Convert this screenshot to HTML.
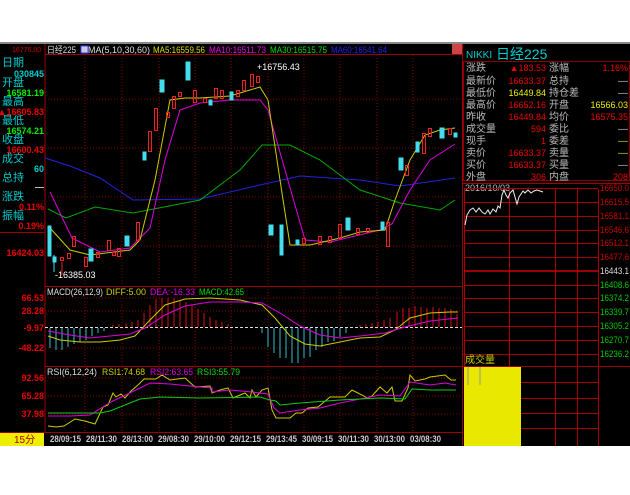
<!DOCTYPE html><html><head><meta charset="utf-8"><style>
body{margin:0;width:630px;height:490px;background:#fff;overflow:hidden;font-family:"Liberation Sans","Noto Sans CJK SC",sans-serif}
svg text{font-family:"Liberation Sans","Noto Sans CJK SC",sans-serif}
</style></head><body>
<svg width="630" height="490" viewBox="0 0 630 490" xmlns="http://www.w3.org/2000/svg">
<rect x="0" y="42" width="630" height="404" fill="#000"/>
<rect x="0" y="42" width="630" height="2" fill="#888"/>
<g stroke="#a00000" fill="none" stroke-width="1">
<line x1="45" y1="44" x2="45" y2="432"/>
<line x1="462.5" y1="44" x2="462.5" y2="446"/>
<line x1="45" y1="54.5" x2="462" y2="54.5"/>
<line x1="45" y1="286.5" x2="462" y2="286.5"/>
<line x1="45" y1="366.5" x2="462" y2="366.5"/>
<line x1="0" y1="432.5" x2="462" y2="432.5"/>
<line x1="0" y1="232.5" x2="45" y2="232.5"/>
<line x1="462" y1="183.5" x2="630" y2="183.5"/>
<line x1="462" y1="354.5" x2="598" y2="354.5"/>
<line x1="462" y1="366.5" x2="630" y2="366.5"/>
</g>
<g stroke="#800000" stroke-dasharray="1,2" fill="none">
<line x1="45" y1="99" x2="462" y2="99"/><line x1="45" y1="148" x2="462" y2="148"/><line x1="45" y1="197" x2="462" y2="197"/><line x1="45" y1="246" x2="462" y2="246"/>
<line x1="45" y1="298" x2="462" y2="298"/><line x1="45" y1="311" x2="462" y2="311"/><line x1="45" y1="348" x2="462" y2="348"/>
<line x1="45" y1="378" x2="462" y2="378"/><line x1="45" y1="396" x2="462" y2="396"/><line x1="45" y1="414" x2="462" y2="414"/>
<line x1="85" y1="55" x2="85" y2="432"/><line x1="122" y1="55" x2="122" y2="432"/><line x1="159" y1="55" x2="159" y2="432"/><line x1="195" y1="55" x2="195" y2="432"/><line x1="231" y1="55" x2="231" y2="432"/><line x1="268" y1="55" x2="268" y2="432"/><line x1="304" y1="55" x2="304" y2="432"/><line x1="340" y1="55" x2="340" y2="432"/><line x1="377" y1="55" x2="377" y2="432"/><line x1="413" y1="55" x2="413" y2="432"/>
</g>
<line x1="45" y1="327.5" x2="462" y2="327.5" stroke="#ddd" stroke-dasharray="3,2"/>
<g font-size="9">
<text x="47" y="53" fill="#ddd" textLength="29" lengthAdjust="spacingAndGlyphs">日经225</text>
<text x="88" y="53" fill="#ddd" textLength="62" lengthAdjust="spacingAndGlyphs">MA(5,10,30,60)</text>
<text x="153" y="53" fill="#dd0" textLength="52" lengthAdjust="spacingAndGlyphs">MA5:16559.56</text>
<text x="209" y="53" fill="#e0e" textLength="57" lengthAdjust="spacingAndGlyphs">MA10:16511.73</text>
<text x="270" y="53" fill="#0d0" textLength="57" lengthAdjust="spacingAndGlyphs">MA30:16515.75</text>
<text x="331" y="53" fill="#22e" textLength="56" lengthAdjust="spacingAndGlyphs">MA60:16541.64</text>
</g>
<rect x="81" y="46" width="7" height="7" fill="#ccd" stroke="#44f"/>
<rect x="452" y="44" width="10" height="10" fill="#c44"/>
<g font-size="9" font-weight="bold">
<text x="12" y="52" font-size="7" font-weight="normal" fill="#c00">16775.00</text>
<text x="2" y="66" fill="#0cc" font-size="11" font-weight="normal">日期</text>
<text x="44" y="77" fill="#0cc" text-anchor="end">030845</text>
<text x="2" y="86" fill="#0cc" font-size="11" font-weight="normal">开盘</text>
<text x="44" y="96" fill="#0e0" text-anchor="end">16581.19</text>
<text x="2" y="105" fill="#0cc" font-size="11" font-weight="normal">最高</text>
<text x="44" y="115" fill="#e00" text-anchor="end">▲16605.83</text>
<text x="2" y="124" fill="#0cc" font-size="11" font-weight="normal">最低</text>
<text x="44" y="134" fill="#0e0" text-anchor="end">16574.21</text>
<text x="2" y="143" fill="#0cc" font-size="11" font-weight="normal">收盘</text>
<text x="44" y="153" fill="#e00" text-anchor="end">16600.43</text>
<text x="2" y="162" fill="#0cc" font-size="11" font-weight="normal">成交</text>
<text x="44" y="172" fill="#0cc" text-anchor="end">60</text>
<text x="2" y="181" fill="#0cc" font-size="11" font-weight="normal">总持</text>
<text x="44" y="190" fill="#ccc" text-anchor="end">—</text>
<text x="2" y="200" fill="#0cc" font-size="11" font-weight="normal">涨跌</text>
<text x="44" y="210" fill="#e00" text-anchor="end">0.11%</text>
<text x="2" y="219" fill="#0cc" font-size="11" font-weight="normal">振幅</text>
<text x="44" y="229" fill="#e00" text-anchor="end">0.19%</text>
<text x="44" y="256" fill="#e00" text-anchor="end">16424.03</text>
<text x="44" y="301" fill="#e00" text-anchor="end">66.53</text>
<text x="44" y="314" fill="#e00" text-anchor="end">28.28</text>
<text x="44" y="331" fill="#e00" text-anchor="end">-9.97</text>
<text x="44" y="351" fill="#e00" text-anchor="end">-48.22</text>
<text x="44" y="381" fill="#e00" text-anchor="end">92.56</text>
<text x="44" y="399" fill="#e00" text-anchor="end">65.28</text>
<text x="44" y="417" fill="#e00" text-anchor="end">37.98</text>
</g>
<g fill="none" stroke-width="1">
<polyline stroke="#22d" points="45,158 70,166 100,178 133,200 200,199 260,185 300,176 360,180 400,186 455,178"/>
<polyline stroke="#0a0" points="48,209 66,218 95,207 133,213 200,200 240,170 262,145 290,145 320,160 360,190 400,203 440,210 455,200"/>
<polyline stroke="#d0d" points="50,192 72,238 100,252 130,248 150,228 165,160 180,110 200,103 230,100 260,100 268,110 285,170 305,240 330,242 380,230 392,224 410,190 430,160 455,144"/>
<polyline stroke="#cc0" points="50,228 70,250 90,255 130,250 140,240 155,180 170,100 185,98 200,98 230,96 260,87 268,100 280,180 290,245 310,245 340,238 360,232 385,230 395,200 410,160 425,135 440,130 455,128"/>
</g>
<g stroke-width="1">
<g fill="#4de" stroke="#4de">
<rect x="48" y="226" width="3" height="30"/><line x1="54" y1="255" x2="54" y2="272"/><rect x="53" y="257" width="3" height="5"/>
<rect x="89" y="249" width="4" height="12"/><rect x="125" y="236" width="4" height="10"/><rect x="143" y="152" width="3" height="8"/><rect x="160" y="80" width="4" height="12"/><rect x="186" y="62" width="4" height="18"/><rect x="209" y="100" width="3" height="5"/><rect x="269" y="225" width="4" height="10"/><rect x="280" y="225" width="3" height="30"/><rect x="296" y="240" width="3" height="5"/><rect x="346" y="218" width="4" height="12"/><rect x="381" y="222" width="3" height="8"/><rect x="399" y="158" width="4" height="12"/><rect x="416" y="142" width="3" height="10"/><rect x="440" y="128" width="4" height="10"/><rect x="454" y="133" width="3" height="4"/>
<rect x="230" y="92" width="3" height="8"/>
</g>
<g fill="none" stroke="#e22">
<rect x="60.5" y="257.5" width="3" height="3"/><line x1="62" y1="262" x2="62" y2="275"/><rect x="67.5" y="253.5" width="3" height="5"/><rect x="72.5" y="236.5" width="3" height="10"/><rect x="84.5" y="257.5" width="3" height="9"/><rect x="96.5" y="252.5" width="3" height="5"/><rect x="107.5" y="240.5" width="3" height="10"/><rect x="112.5" y="252.5" width="3" height="3"/><rect x="117.5" y="248.5" width="3" height="8"/><rect x="136.5" y="222.5" width="3" height="18"/><rect x="148.5" y="131.5" width="3" height="20"/><rect x="154.5" y="108.5" width="3" height="22"/><rect x="166.5" y="112.5" width="3" height="5"/><rect x="172.5" y="96.5" width="3" height="12"/><rect x="178.5" y="92.5" width="3" height="4"/><rect x="193.5" y="90.5" width="3" height="12"/><rect x="203.5" y="98.5" width="3" height="4"/><rect x="214.5" y="88.5" width="3" height="10"/><rect x="220.5" y="90.5" width="3" height="8"/><rect x="236.5" y="90.5" width="3" height="6"/><rect x="242.5" y="80.5" width="3" height="10"/><rect x="250.5" y="74.5" width="3" height="12"/><rect x="256.5" y="76.5" width="3" height="6"/><rect x="302.5" y="238.5" width="3" height="5"/><rect x="318.5" y="236.5" width="3" height="8"/><rect x="328.5" y="236.5" width="3" height="6"/><rect x="338.5" y="224.5" width="3" height="14"/><rect x="356.5" y="228.5" width="3" height="6"/><rect x="366.5" y="228.5" width="3" height="4"/><rect x="386.5" y="222.5" width="3" height="24"/><rect x="405.5" y="165.5" width="3" height="10"/><rect x="422.5" y="133.5" width="3" height="20"/><rect x="428.5" y="128.5" width="3" height="8"/><rect x="448.5" y="128.5" width="3" height="6"/>
</g>
</g>
<text x="257" y="70" font-size="9" fill="#fff">+16756.43</text>
<text x="55" y="278" font-size="9" fill="#fff">-16385.03</text>
<text x="47" y="295" font-size="9" fill="#ddd" textLength="56" lengthAdjust="spacingAndGlyphs">MACD(26,12,9)</text>
<text x="106" y="295" font-size="9" fill="#cc0" textLength="40" lengthAdjust="spacingAndGlyphs">DIFF:5.00</text>
<text x="150" y="295" font-size="9" fill="#d0d" textLength="45" lengthAdjust="spacingAndGlyphs">DEA:-16.33</text>
<text x="199" y="295" font-size="9" fill="#0d0" textLength="45" lengthAdjust="spacingAndGlyphs">MACD:42.65</text>
<g stroke="#3bc"><line x1="50" y1="328" x2="50" y2="348"/><line x1="56" y1="328" x2="56" y2="350"/><line x1="62" y1="328" x2="62" y2="350"/><line x1="68" y1="328" x2="68" y2="347"/><line x1="74" y1="328" x2="74" y2="344"/><line x1="80" y1="328" x2="80" y2="342"/><line x1="86" y1="328" x2="86" y2="340"/><line x1="92" y1="328" x2="92" y2="336"/><line x1="98" y1="328" x2="98" y2="333"/><line x1="104" y1="328" x2="104" y2="331"/>
<line x1="262" y1="328" x2="262" y2="333"/><line x1="268" y1="328" x2="268" y2="347"/><line x1="274" y1="328" x2="274" y2="353"/><line x1="280" y1="328" x2="280" y2="358"/><line x1="286" y1="328" x2="286" y2="358"/><line x1="292" y1="328" x2="292" y2="363"/><line x1="298" y1="328" x2="298" y2="363"/><line x1="304" y1="328" x2="304" y2="358"/><line x1="310" y1="328" x2="310" y2="357"/><line x1="316" y1="328" x2="316" y2="350"/><line x1="322" y1="328" x2="322" y2="347"/><line x1="328" y1="328" x2="328" y2="342"/><line x1="334" y1="328" x2="334" y2="341"/><line x1="340" y1="328" x2="340" y2="337"/><line x1="346" y1="328" x2="346" y2="333"/></g>
<g stroke="#d11"><line x1="113" y1="327" x2="113" y2="325"/><line x1="119" y1="327" x2="119" y2="324"/><line x1="126" y1="327" x2="126" y2="323"/><line x1="132" y1="327" x2="132" y2="322"/><line x1="138" y1="327" x2="138" y2="320"/><line x1="144" y1="327" x2="144" y2="313"/><line x1="150" y1="327" x2="150" y2="305"/><line x1="156" y1="327" x2="156" y2="299"/><line x1="162" y1="327" x2="162" y2="298"/><line x1="168" y1="327" x2="168" y2="298"/><line x1="174" y1="327" x2="174" y2="298"/><line x1="180" y1="327" x2="180" y2="301"/><line x1="186" y1="327" x2="186" y2="302"/><line x1="192" y1="327" x2="192" y2="305"/><line x1="198" y1="327" x2="198" y2="309"/><line x1="204" y1="327" x2="204" y2="313"/><line x1="210" y1="327" x2="210" y2="317"/><line x1="216" y1="327" x2="216" y2="320"/><line x1="222" y1="327" x2="222" y2="322"/><line x1="228" y1="327" x2="228" y2="324"/>
<line x1="360" y1="327" x2="360" y2="325"/><line x1="366" y1="327" x2="366" y2="324"/><line x1="372" y1="327" x2="372" y2="323"/><line x1="378" y1="327" x2="378" y2="322"/><line x1="384" y1="327" x2="384" y2="320"/><line x1="390" y1="327" x2="390" y2="318"/><line x1="397" y1="327" x2="397" y2="312"/><line x1="403" y1="327" x2="403" y2="308"/><line x1="409" y1="327" x2="409" y2="308"/><line x1="415" y1="327" x2="415" y2="306"/><line x1="421" y1="327" x2="421" y2="307"/><line x1="427" y1="327" x2="427" y2="308"/><line x1="433" y1="327" x2="433" y2="307"/><line x1="439" y1="327" x2="439" y2="308"/><line x1="445" y1="327" x2="445" y2="308"/><line x1="451" y1="327" x2="451" y2="309"/><line x1="457" y1="327" x2="457" y2="314"/></g>
<polyline fill="none" stroke="#cc0" points="48,336 60,340 80,342 100,342 120,340 135,336 150,320 165,305 185,299 210,298 240,300 262,305 275,318 290,336 305,344 320,346 340,342 360,338 380,337 395,330 410,318 430,313 450,312 458,312"/>
<polyline fill="none" stroke="#d0d" points="48,331 70,335 90,338 110,336 130,334 145,328 165,315 185,306 210,302 240,302 262,303 280,313 300,326 320,335 340,338 360,336 385,333 405,327 430,321 458,318"/>
<text x="47" y="375" font-size="9" fill="#ddd" textLength="50" lengthAdjust="spacingAndGlyphs">RSI(6,12,24)</text>
<text x="102" y="375" font-size="9" fill="#cc0" textLength="43" lengthAdjust="spacingAndGlyphs">RSI1:74.68</text>
<text x="150" y="375" font-size="9" fill="#d0d" textLength="43" lengthAdjust="spacingAndGlyphs">RSI2:63.65</text>
<text x="197" y="375" font-size="9" fill="#0d0" textLength="43" lengthAdjust="spacingAndGlyphs">RSI3:55.79</text>
<polyline fill="none" stroke="#cc0" points="48,426 56,427 64,426 75,419 85,421 95,424 103,407 108,405 113,393 116,397 121,394 125,398 131,391 138,385 144,379 156,379 162,375 170,380 185,378 195,387 210,386 212,393 220,390 228,388 233,398 245,393 250,398 252,390 256,397 262,390 268,388 272,410 276,418 290,418 296,413 302,413 308,408 318,407 330,397 345,397 352,390 364,396 367,398 372,396 380,387 387,393 392,387 395,401 402,401 408,388 410,375 415,381 425,379 430,377 445,375 451,380 456,380"/>
<polyline fill="none" stroke="#d0d" points="48,416 70,416 90,415 106,405 113,401 140,388 150,383 170,384 190,386 212,388 212,392 230,390 252,392 268,394 274,408 280,413 300,410 320,408 340,403 370,397 380,395 400,396 410,382 430,385 445,383 456,385"/>
<polyline fill="none" stroke="#1c1" points="48,413 100,413 110,411 140,399 160,397 200,398 260,397 270,400 276,401 280,405 300,403 340,400 380,398 405,399 412,389 430,390 456,390"/>
<rect x="0" y="433" width="44" height="13" fill="#ee0"/>
<text x="14" y="443" font-size="10" fill="#a00">15分</text>
<g font-size="9" fill="#ccc" font-weight="bold">
<text x="50" y="442" textLength="31" lengthAdjust="spacingAndGlyphs">28/09:15</text><text x="86" y="442" textLength="31" lengthAdjust="spacingAndGlyphs">28/11:30</text><text x="122" y="442" textLength="31" lengthAdjust="spacingAndGlyphs">28/13:00</text><text x="158" y="442" textLength="31" lengthAdjust="spacingAndGlyphs">29/08:30</text><text x="194" y="442" textLength="31" lengthAdjust="spacingAndGlyphs">29/10:00</text><text x="230" y="442" textLength="31" lengthAdjust="spacingAndGlyphs">29/12:15</text><text x="266" y="442" textLength="31" lengthAdjust="spacingAndGlyphs">29/13:45</text><text x="302" y="442" textLength="31" lengthAdjust="spacingAndGlyphs">30/09:15</text><text x="338" y="442" textLength="31" lengthAdjust="spacingAndGlyphs">30/11:30</text><text x="374" y="442" textLength="31" lengthAdjust="spacingAndGlyphs">30/13:00</text><text x="410" y="442" textLength="31" lengthAdjust="spacingAndGlyphs">03/08:30</text>
</g>
<text x="466" y="58" font-size="10" fill="#0cc">NIKKI</text>
<text x="496" y="59" font-size="14" fill="#0cc">日经225</text>
<rect x="463.5" y="61.5" width="166" height="119" fill="none" stroke="#800"/>
<g font-size="10">
<text x="466" y="71" fill="#bbb">涨跌</text><text x="546" y="71" fill="#e00" text-anchor="end" font-size="9">▲183.53</text><text x="549" y="71" fill="#bbb">涨幅</text><text x="628" y="71" fill="#e00" text-anchor="end" font-size="9">1.16%</text>
<text x="466" y="84" fill="#bbb">最新价</text><text x="546" y="84" fill="#e00" text-anchor="end" font-size="9">16633.37</text><text x="549" y="84" fill="#bbb">总持</text><text x="628" y="84" fill="#bbb" text-anchor="end">—</text>
<text x="466" y="96" fill="#bbb">最低价</text><text x="546" y="96" fill="#ee0" text-anchor="end" font-size="9">16449.84</text><text x="549" y="96" fill="#bbb">持仓差</text><text x="628" y="96" fill="#bbb" text-anchor="end">—</text>
<text x="466" y="108" fill="#bbb">最高价</text><text x="546" y="108" fill="#e00" text-anchor="end" font-size="9">16652.16</text><text x="549" y="108" fill="#bbb">开盘</text><text x="628" y="108" fill="#ee0" text-anchor="end" font-size="9">16566.03</text>
<text x="466" y="120" fill="#bbb">昨收</text><text x="546" y="120" fill="#e00" text-anchor="end" font-size="9">16449.84</text><text x="549" y="120" fill="#bbb">均价</text><text x="628" y="120" fill="#e00" text-anchor="end" font-size="9">16575.35</text>
<text x="466" y="132" fill="#bbb">成交量</text><text x="546" y="132" fill="#e00" text-anchor="end" font-size="9">594</text><text x="549" y="132" fill="#bbb">委比</text><text x="628" y="132" fill="#bbb" text-anchor="end">—</text>
<text x="466" y="144" fill="#bbb">现手</text><text x="546" y="144" fill="#e00" text-anchor="end" font-size="9">1</text><text x="549" y="144" fill="#bbb">委差</text><text x="628" y="144" fill="#cc0" text-anchor="end">—</text>
<text x="466" y="156" fill="#bbb">卖价</text><text x="546" y="156" fill="#e00" text-anchor="end" font-size="9">16633.37</text><text x="549" y="156" fill="#bbb">卖量</text><text x="628" y="156" fill="#cc0" text-anchor="end">—</text>
<text x="466" y="168" fill="#bbb">买价</text><text x="546" y="168" fill="#e00" text-anchor="end" font-size="9">16633.37</text><text x="549" y="168" fill="#bbb">买量</text><text x="628" y="168" fill="#bbb" text-anchor="end">—</text>
<text x="466" y="180" fill="#bbb">外盘</text><text x="546" y="180" fill="#e00" text-anchor="end" font-size="9">306</text><text x="549" y="180" fill="#bbb">内盘</text><text x="628" y="180" fill="#e00" text-anchor="end" font-size="9">208</text>
</g>
<text x="465" y="191" font-size="9" fill="#bbb">2016/10/03 —</text>
<g stroke="#a00" fill="none">
<line x1="464.5" y1="189" x2="464.5" y2="446"/><line x1="509.5" y1="189" x2="509.5" y2="446"/><line x1="555.5" y1="189" x2="555.5" y2="446"/><line x1="577.5" y1="189" x2="577.5" y2="446"/><line x1="598.5" y1="189" x2="598.5" y2="446"/>
<line x1="464" y1="188.5" x2="598" y2="188.5"/><line x1="464" y1="202.5" x2="598" y2="202.5"/><line x1="464" y1="216.5" x2="598" y2="216.5"/><line x1="464" y1="230.5" x2="598" y2="230.5"/><line x1="464" y1="243.5" x2="598" y2="243.5"/><line x1="464" y1="257.5" x2="598" y2="257.5"/><line x1="464" y1="285.5" x2="598" y2="285.5"/><line x1="464" y1="298.5" x2="598" y2="298.5"/><line x1="464" y1="312.5" x2="598" y2="312.5"/><line x1="464" y1="326.5" x2="598" y2="326.5"/><line x1="464" y1="340.5" x2="598" y2="340.5"/>
<line x1="464" y1="382.5" x2="598" y2="382.5"/><line x1="464" y1="398.5" x2="598" y2="398.5"/><line x1="464" y1="413.5" x2="598" y2="413.5"/><line x1="464" y1="428.5" x2="598" y2="428.5"/>
</g>
<line x1="464" y1="271" x2="598" y2="271" stroke="#c00" stroke-width="1.5"/>
<polyline fill="none" stroke="#eee" points="465,225 467,215 470,210 473,208 476,212 479,208 482,212 485,214 488,210 490,214 493,209 496,212 498,206 500,208 502,195 504,190 506,195 508,198 510,193 513,190 515,197 517,204 519,197 521,194 523,191 525,193 528,190 531,193 534,191 537,190 540,191 543,192"/>
<g font-size="9">
<text x="600" y="191" fill="#c00" textLength="29" lengthAdjust="spacingAndGlyphs">16650.0</text><text x="600" y="205" fill="#c00" textLength="29" lengthAdjust="spacingAndGlyphs">16615.5</text><text x="600" y="219" fill="#c00" textLength="29" lengthAdjust="spacingAndGlyphs">16581.1</text><text x="600" y="233" fill="#c00" textLength="29" lengthAdjust="spacingAndGlyphs">16546.6</text><text x="600" y="246" fill="#c00" textLength="29" lengthAdjust="spacingAndGlyphs">16512.1</text><text x="600" y="260" fill="#c00" textLength="29" lengthAdjust="spacingAndGlyphs">16477.6</text><text x="600" y="274" fill="#ddd" textLength="29" lengthAdjust="spacingAndGlyphs">16443.1</text><text x="600" y="288" fill="#0c0" textLength="29" lengthAdjust="spacingAndGlyphs">16408.6</text><text x="600" y="301" fill="#0c0" textLength="29" lengthAdjust="spacingAndGlyphs">16374.2</text><text x="600" y="315" fill="#0c0" textLength="29" lengthAdjust="spacingAndGlyphs">16339.7</text><text x="600" y="329" fill="#0c0" textLength="29" lengthAdjust="spacingAndGlyphs">16305.2</text><text x="600" y="343" fill="#0c0" textLength="29" lengthAdjust="spacingAndGlyphs">16270.7</text><text x="600" y="357" fill="#0c0" textLength="29" lengthAdjust="spacingAndGlyphs">16236.2</text>
</g>
<text x="465" y="363" font-size="10" fill="#cc0">成交量</text>
<rect x="464" y="367" width="57" height="79" fill="#e8e800"/>
<line x1="468" y1="367" x2="468" y2="385" stroke="#999"/><line x1="480" y1="367" x2="480" y2="385" stroke="#999"/>
</svg>
</body></html>
